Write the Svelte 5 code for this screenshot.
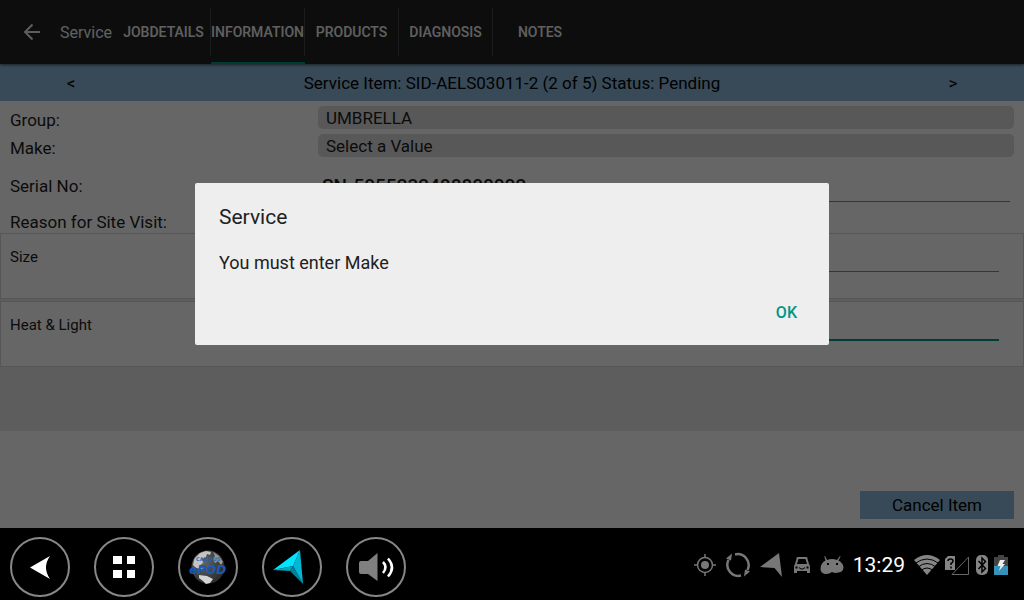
<script>
  let tabs = ["JOBDETAILS", "INFORMATION", "PRODUCTS", "DIAGNOSIS", "NOTES"];
  let activeTab = "INFORMATION";
  let group = "UMBRELLA";
  let make = "Select a Value";
  let serial = "SN-5055232488800002";
  let reasons = [
    { id: "size", label: "Size", value: "", focused: false },
    { id: "heat", label: "Heat & Light", value: "", focused: true },
  ];
  let showDialog = true;
</script>

<div class="device">
  <div class="app">
    <header>
      <button class="back" aria-label="Back">
        <svg width="24" height="24" viewBox="0 0 24 24" fill="none" stroke="#fff" stroke-width="2">
          <path d="M20 12H5M12.500 4.500L5 12l7.500 7.500" />
        </svg>
      </button>
      <h1>Service</h1>
      <nav>
        {#each tabs as tab}
          <button class="tab" class:active={tab === activeTab} on:click={() => (activeTab = tab)}><span>{tab}</span></button>
        {/each}
      </nav>
    </header>

    <div class="pager">
      <button aria-label="Previous item">&lt;</button>
      <div class="item">Service Item: SID-AELS03011-2 (2 of 5) Status: Pending</div>
      <button aria-label="Next item">&gt;</button>
    </div>

    <main>
      <div class="row">
        <label for="group">Group:</label>
        <select id="group" bind:value={group}><option>UMBRELLA</option></select>
      </div>
      <div class="row">
        <label for="make">Make:</label>
        <select id="make" bind:value={make}><option>Select a Value</option></select>
      </div>
      <div class="row serial">
        <label for="serial">Serial No:</label>
        <input id="serial" type="text" bind:value={serial} />
      </div>
      <div class="reason">Reason for Site Visit:</div>
      <div class="cards">
        {#each reasons as r}
          <div class="card">
            <label for={r.id}>{r.label}</label>
            <input id={r.id} type="text" class:focused={r.focused} bind:value={r.value} />
          </div>
        {/each}
      </div>
    </main>

    <footer>
      <button class="cancel">Cancel Item</button>
    </footer>

    {#if showDialog}
      <div class="overlay">
        <div class="dialog" role="alertdialog" aria-labelledby="dialog-title" aria-describedby="dialog-text">
          <h2 id="dialog-title">Service</h2>
          <p id="dialog-text">You must enter Make</p>
          <div class="actions">
            <button on:click={() => (showDialog = false)}>OK</button>
          </div>
        </div>
      </div>
    {/if}
  </div>

  <div class="navbar">
    <div class="keys">
      <button class="key" aria-label="Back">
        <svg width="54" height="54" viewBox="0 0 54 54"><path d="M17 27.500L37 16q-8 11.500 0 23z" fill="#fff" /></svg>
      </button>
      <button class="key" aria-label="Apps">
        <svg width="54" height="54" viewBox="0 0 54 54" fill="#fff">
          <path d="M16 16h9v8h-9zM30 16h8v8h-8zM16 30h9v8h-9zM30 30h8v8h-8z" />
        </svg>
      </button>
      <button class="key" aria-label="ePOD">
        <svg width="54" height="54" viewBox="0 0 54 54">
          <defs>
            <radialGradient id="globe" cx="35%" cy="35%" r="70%">
              <stop offset="0" stop-color="#666" />
              <stop offset="1" stop-color="#2c2c2c" />
            </radialGradient>
          </defs>
          <circle cx="27" cy="27" r="16.500" fill="url(#globe)" />
          <path d="M14 18l5-5 6-2 5 1-1 3-3-1-1 3-4 2 1 4-4 3 4 3-7-1-3-3 1-5z" fill="#c4c4c4" />
          <path d="M18 35l8 1 6 3-3 4-4 1-3-3-4-3z" fill="#d4d4d4" />
          <path d="M32 12l6 4 4 6-2 3-3-4-3 2-2-4 2-3z" fill="#999" />
          <text class="brand" x="15" y="21">CALIDUS</text>
          <text class="logo" x="8" y="34">ePOD</text>
        </svg>
      </button>
      <button class="key" aria-label="Navigation">
        <svg width="54" height="54" viewBox="0 0 54 54">
          <path d="M35 10L8 30l20-4z" fill="#00e5ff" />
          <path d="M35 10l3 34-10-18z" fill="#00b8d4" />
          <path d="M8 30l20-4-3 5z" fill="#00a5bd" />
          <path d="M28 26l10 18-13-13z" fill="#00839a" />
        </svg>
      </button>
      <button class="key" aria-label="Volume">
        <svg width="54" height="54" viewBox="0 0 54 54">
          <path d="M10 23q0-2 2-2h7l9.500-8v28L19 34h-7q-2 0-2-2z" fill="#808080" />
          <path d="M34 22q5 5 0 11M39 18.500q8 9 0 18" fill="none" stroke="#fff" stroke-width="2.500" />
        </svg>
      </button>
    </div>

    <div class="status">
      <div class="notices">
        <svg width="22" height="24" viewBox="0 0 22 24" fill="none" stroke="#777" stroke-width="1.500">
          <circle cx="11" cy="12" r="7.500" />
          <circle cx="11" cy="12" r="4" fill="#777" stroke="none" />
          <path d="M11 1v4M11 19v4M0 12h4M18 12h4" />
        </svg>
        <svg width="26" height="26" viewBox="0 0 26 26" fill="none" stroke="#777" stroke-width="2.500">
          <path d="M10 2.500A11 11 0 0 1 22.500 18M16 23.500A11 11 0 0 1 3.500 8" />
          <path d="M7 1.500l-1 7-5-2zM19 24.500l1-7 5 2z" fill="#777" stroke="none" />
        </svg>
        <svg width="24" height="26" viewBox="0 0 24 26"><path d="M19 1L0 15l14.500 1L22 25z" fill="#777" /></svg>
        <svg width="18" height="20" viewBox="0 0 18 20">
          <path fill-rule="evenodd" d="M4 2h10l2 7 1 2v7h-3v-2H4v2H1v-7l1-2zM5.500 4L4 9h10l-1.500-5zM2.500 11.500v2h2v-2zM13.500 11.500v2h2v-2zM6 12q3 3 6 0v1q-3 3-6 0z" fill="#777" />
        </svg>
        <svg width="24" height="20" viewBox="0 0 24 20">
          <path fill-rule="evenodd" d="M5 1l2 4q5-2 10 0l3-4 .6.500L18.500 5.500Q23 8 23.500 12q0 5-5 5.500Q15 18.500 12 17q-3 2.500-7 2-4.500-1-4.500-5 0-6 5-8.500L4.300 1.500zM7 8v2h2V8zM16 8v2h2V8z" fill="#777" />
        </svg>
      </div>
      <time>13:29</time>
      <div class="system">
        <svg width="26" height="20" viewBox="0 0 26 20">
          <path d="M0 5Q13-5 26 5L13 20z" fill="#858585" />
          <path d="M1 8.500q12-9 24 0M4 12q9-7 18 0M7 15.500q6-5 12 0" fill="none" stroke="#000" stroke-width="1" />
        </svg>
        <svg width="25" height="22" viewBox="0 0 25 22">
          <path d="M7 20.500L23.500 3v17.500z" fill="none" stroke="#666" stroke-width="1" />
          <path d="M3 2h7v14H0V5z" fill="#858585" />
          <path d="M3 7q0-2 2.500-2T8 7q0 1.500-2 2.500V11M6 12.500v2" fill="none" stroke="#000" stroke-width="1.500" />
        </svg>
        <svg width="14" height="22" viewBox="0 0 14 22">
          <rect x="1" y="1" width="12" height="20" rx="5" fill="#858585" />
          <path d="M3.500 7l7 7.500L7 18V4l3.500 3.500-7 7.500" fill="none" stroke="#000" stroke-width="1.500" />
        </svg>
        <svg width="14" height="22" viewBox="0 0 14 22">
          <path d="M4 1h6v2h4v9H0V3h4z" fill="#444" />
          <path d="M0 12h14v9H0z" fill="#3592b8" />
          <path d="M6 6h5L8.500 10H11l-6 7 1.500-5H3.500z" fill="#eee" />
        </svg>
      </div>
    </div>
  </div>
</div>

<style>
:global(body) {
  margin: 0;
  background-color: #000;
}

.device {
  display: flex;
  flex-direction: column;
  min-height: 100vh;
  font-family: Roboto, "Noto Sans", sans-serif;
  font-size: 17px;
  color: #1c1c1c;
}

button,
input,
select {
  box-sizing: border-box;
  margin: 0;
  padding: 0;
  border: none;
  background: none;
  font: inherit;
  color: inherit;
}

svg {
  display: block;
}

.app {
  position: relative;
  display: flex;
  flex-direction: column;
  flex: 1;
  background-color: #fff;
}

header {
  display: flex;
  align-items: center;
  height: 64px;
  background-color: #212121;
  box-shadow: 0 1px 3px rgba(0, 0, 0, 0.6);
  z-index: 1;
}

.back {
  margin-left: 20px;
}

.back svg {
  opacity: 0.9;
}

h1 {
  flex: none;
  box-sizing: border-box;
  margin: 0;
  width: 73px;
  padding-left: 16px;
  font-size: 16px;
  font-weight: normal;
  color: #f0f0f0;
}

nav {
  display: flex;
  height: 64px;
}

.tab {
  width: 94px;
  padding-top: 8px;
  border-bottom: 2px solid transparent;
  font-size: 14px;
  font-weight: 500;
  color: #f0f0f0;
}

.tab span {
  display: flex;
  align-items: center;
  justify-content: center;
  height: 48px;
  margin-bottom: 6px;
  border-right: 1px solid #484848;
}

.tab:last-child span {
  border-right: none;
}

.tab.active {
  border-bottom-color: #009688;
}

.pager {
  display: flex;
  align-items: center;
  height: 37px;
  background-color: #8cb9dc;
  color: #000;
}

.pager button {
  width: 142px;
}

.pager .item {
  flex: 1;
  text-align: center;
}

main {
  padding-top: 5px;
}

.row {
  display: flex;
  align-items: center;
  height: 28px;
  padding: 0 10px;
}

.row label {
  width: 308px;
  flex: none;
}

.row select {
  flex: 1;
  height: 23px;
  margin-bottom: 5px;
  padding: 0 8px;
  border-radius: 5px;
  background-color: #dcdcdc;
  appearance: none;
}

.serial {
  height: 48px;
}

.serial input {
  flex: 1;
  height: 32px;
  margin: 0 4px;
  border-bottom: 1px solid #888;
  font-size: 19px;
  font-weight: 500;
}

.reason {
  padding: 2px 10px 1px;
  line-height: 20px;
}

.cards {
  display: flex;
  flex-direction: column;
  gap: 2px;
  padding-bottom: 64px;
  background-color: #e8e8e8;
}

.card {
  display: flex;
  align-items: flex-start;
  box-sizing: border-box;
  height: 66px;
  padding: 6px 24px 0 9px;
  border: 1px solid #d8d8d8;
  background-color: #fff;
}

.card label {
  width: 308px;
  flex: none;
  font-size: 15px;
  line-height: 34px;
}

.card input {
  flex: 1;
  height: 32px;
  border-bottom: 1px solid #888;
}

.card input.focused {
  height: 33px;
  border-bottom: 2px solid #009688;
}

footer {
  display: flex;
  justify-content: flex-end;
  margin-top: auto;
  padding: 9px 10px;
}

.cancel {
  width: 154px;
  height: 28px;
  background-color: #8cb9dc;
  color: #000;
}

.overlay {
  position: absolute;
  inset: 0;
  z-index: 2;
  display: flex;
  align-items: center;
  justify-content: center;
  background-color: rgba(0, 0, 0, 0.6);
}

.dialog {
  box-sizing: border-box;
  width: min(634px, 90%);
  padding: 18px 24px 14px;
  border-radius: 2px;
  background-color: #eee;
  color: #212121;
}

.dialog h2 {
  margin: 0;
  font-size: 21px;
  font-weight: normal;
  line-height: 32px;
}

.dialog p {
  margin: 16px 0 18px;
  font-size: 18px;
  line-height: 28px;
}

.actions {
  display: flex;
  justify-content: flex-end;
}

.actions button {
  padding: 0 8px;
  font-size: 16px;
  font-weight: 500;
  line-height: 36px;
  color: #009688;
}

.navbar {
  display: flex;
  align-items: center;
  justify-content: space-between;
  height: 72px;
  background-color: #000;
}

.keys {
  display: flex;
  gap: 24px;
  padding: 6px 0 0 10px;
}

.key {
  display: flex;
  align-items: center;
  justify-content: center;
  width: 60px;
  height: 60px;
  border: 2px solid #888;
  border-radius: 50%;
}

.key svg {
  flex: none;
}

.brand {
  font-family: "DejaVu Sans", sans-serif;
  font-size: 5px;
  font-weight: bold;
  fill: #2464b4;
}

.logo {
  font-family: "DejaVu Sans", sans-serif;
  font-size: 12px;
  font-style: italic;
  font-weight: bold;
  fill: #1a5bb5;
}

.status {
  display: flex;
  align-items: center;
  gap: 9px;
  padding: 2px 16px 0 0;
}

.notices,
.system {
  display: flex;
  align-items: center;
  gap: 9px;
}

.system {
  gap: 5px;
}

time {
  font-size: 21px;
  color: #fff;
}
</style>
